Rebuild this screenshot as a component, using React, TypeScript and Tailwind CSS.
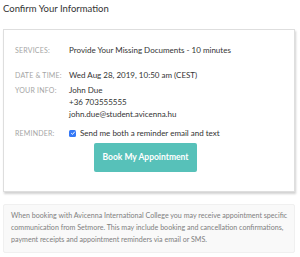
const rowLabel = "w-[54px] shrink-0 text-[7px] uppercase tracking-[0.2px] text-[#a5a5a5]";

export default function App() {
  return (
    <div
      className="w-[300px] h-[257px] bg-white px-[3px] text-[#333]"
      style={{ fontFamily: "Lato, 'Open Sans', sans-serif" }}
    >
      <h1 className="pt-[2px] text-[9.5px] leading-[13px] text-[#333]">Confirm Your Information</h1>

      {/* Summary card */}
      <div className="mt-[14px] w-[292px] h-[163px] border border-[#dedede] bg-white shadow-[1px_2px_2px_rgba(0,0,0,0.18)] pl-[11px] pt-[14px]">
        <div className="flex items-center h-[12px]">
          <span className={rowLabel}>Services:</span>
          <span className="text-[8px]">Provide Your Missing Documents - 10 minutes</span>
        </div>

        <div className="flex items-center h-[12px] mt-[13px]">
          <span className={rowLabel}>Date &amp; Time:</span>
          <span className="text-[8px]">Wed Aug 28, 2019, 10:50 am (CEST)</span>
        </div>

        <div className="flex mt-[3px]">
          <span className={`${rowLabel} leading-[12px]`}>Your Info:</span>
          <div className="flex flex-col text-[8px] leading-[12px]">
            <span>John Due</span>
            <span>+36 703555555</span>
            <span>john.due@student.avicenna.hu</span>
          </div>
        </div>

        <div className="flex items-center h-[12px] mt-[7px]">
          <span className={rowLabel}>Reminder:</span>
          <span className="w-[7px] h-[7px] rounded-[1.5px] bg-[#3478f6] flex items-center justify-center">
            <svg viewBox="0 0 10 10" className="w-[6px] h-[6px]">
              <path d="M2 5.2 L4.2 7.3 L8 2.8" stroke="white" strokeWidth="1.6" fill="none" />
            </svg>
          </span>
          <span className="ml-[4px] text-[8px]">Send me both a reminder email and text</span>
        </div>

        <div className="flex pl-[79px] mt-[4px]">
          <button className="w-[103px] h-[29px] rounded-[2px] bg-[#57c1b9] text-white text-[8.5px] font-bold">
            Book My Appointment
          </button>
        </div>
      </div>

      {/* Footnote */}
      <div className="mt-[12px] w-[292px] rounded-[2px] border border-[#f0f0f0] bg-[#f9f9f9] pl-[7px] pr-[4px] pt-[5px] pb-[6px] text-[7.1px] leading-[12px] text-[#808080]">
        When booking with Avicenna International College you may receive appointment specific communication from Setmore. This may include booking and cancellation confirmations, payment receipts and appointment reminders via email or SMS.
      </div>
    </div>
  );
}
